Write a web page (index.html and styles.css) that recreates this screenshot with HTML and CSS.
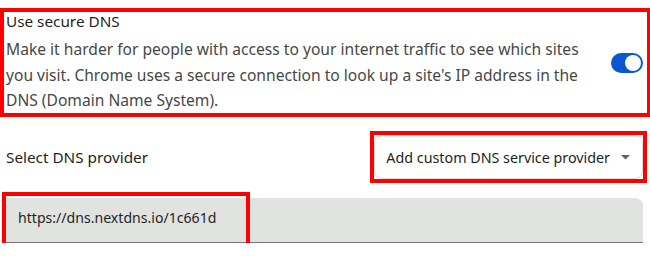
FILE: index.html
```html
<!DOCTYPE html>
<html>
<head>
<meta charset="utf-8">
<link rel="stylesheet" href="styles.css">
</head>
<body>
<div class="page">
  <div class="secure mark">
    <div class="secure-text">
      <div class="title">Use secure DNS</div>
      <div class="desc">Make it harder for people with access to your internet traffic to see which sites you visit. Chrome uses a secure connection to look up a site's IP address in the DNS (Domain Name System).</div>
    </div>
    <div class="toggle"><div class="knob"></div></div>
  </div>
  <div class="provider-row">
    <div class="label">Select DNS provider</div>
    <div class="select-wrap mark">
      <div class="select">
        <span>Add custom DNS service provider</span>
        <svg class="arrow" width="9" height="5" viewBox="0 0 9 5"><path d="M0 0 L9 0 L4.5 4.5 Z" fill="#5f6368"/></svg>
      </div>
    </div>
  </div>
  <div class="input">
    <div class="input-mark mark">
      <span class="value">https://dns.nextdns.io/1c661d</span>
    </div>
  </div>
</div>
</body>
</html>
```
FILE: styles.css
```css
html, body {
  margin: 0;
  padding: 0;
  background: #fff;
}
body {
  font-family: "Noto Sans", "Open Sans", sans-serif;
  color: #1f1f1f;
}
.page {
  padding-top: 8px;
  width: 650px;
}
.mark {
  border: 4px solid #ff0000;
}
.secure {
  display: flex;
  align-items: flex-start;
  width: 641px;
  height: 101px;
  padding: 0 0 0 2px;
}
.secure-text {
  flex: 1;
}
.title {
  font-size: 15.3px;
  line-height: 18px;
  color: #1f1f1f;
}
.desc {
  margin-top: 7px;
  font-size: 15.6px;
  line-height: 25.5px;
  color: #474747;
  width: 578px;
}
.toggle {
  align-self: center;
  width: 32px;
  height: 20px;
  border-radius: 10px;
  background: #0b57d0;
  margin-right: 4px;
  display: flex;
  align-items: center;
  justify-content: flex-end;
  padding-right: 2px;
  box-sizing: border-box;
}
.knob {
  width: 16px;
  height: 16px;
  border-radius: 50%;
  background: #fff;
}
.provider-row {
  display: flex;
  align-items: center;
  justify-content: space-between;
  margin-top: 14px;
  padding-left: 6px;
}
.label {
  font-size: 15.3px;
  color: #1f1f1f;
}
.select-wrap {
  margin-right: 3px;
}
.select {
  display: flex;
  align-items: center;
  gap: 11px;
  height: 42px;
  padding: 0 12px 0 11px;
  border: 1px solid #dadce0;
  border-radius: 8px;
  font-size: 14.3px;
  color: #1f1f1f;
}
.input {
  margin: 15px 7px 0 6px;
  height: 44px;
  background: #e1e3e1;
  border-bottom: 1px solid #747775;
  border-radius: 0 8px 0 0;
  position: relative;
}
.input-mark {
  position: absolute;
  left: -4px;
  top: -6px;
  box-sizing: border-box;
  width: 248px;
  height: 57px;
  display: flex;
  align-items: center;
  padding-left: 12px;
  padding-bottom: 6px;
}
.value {
  font-size: 14.1px;
  color: #1f1f1f;
}
```
